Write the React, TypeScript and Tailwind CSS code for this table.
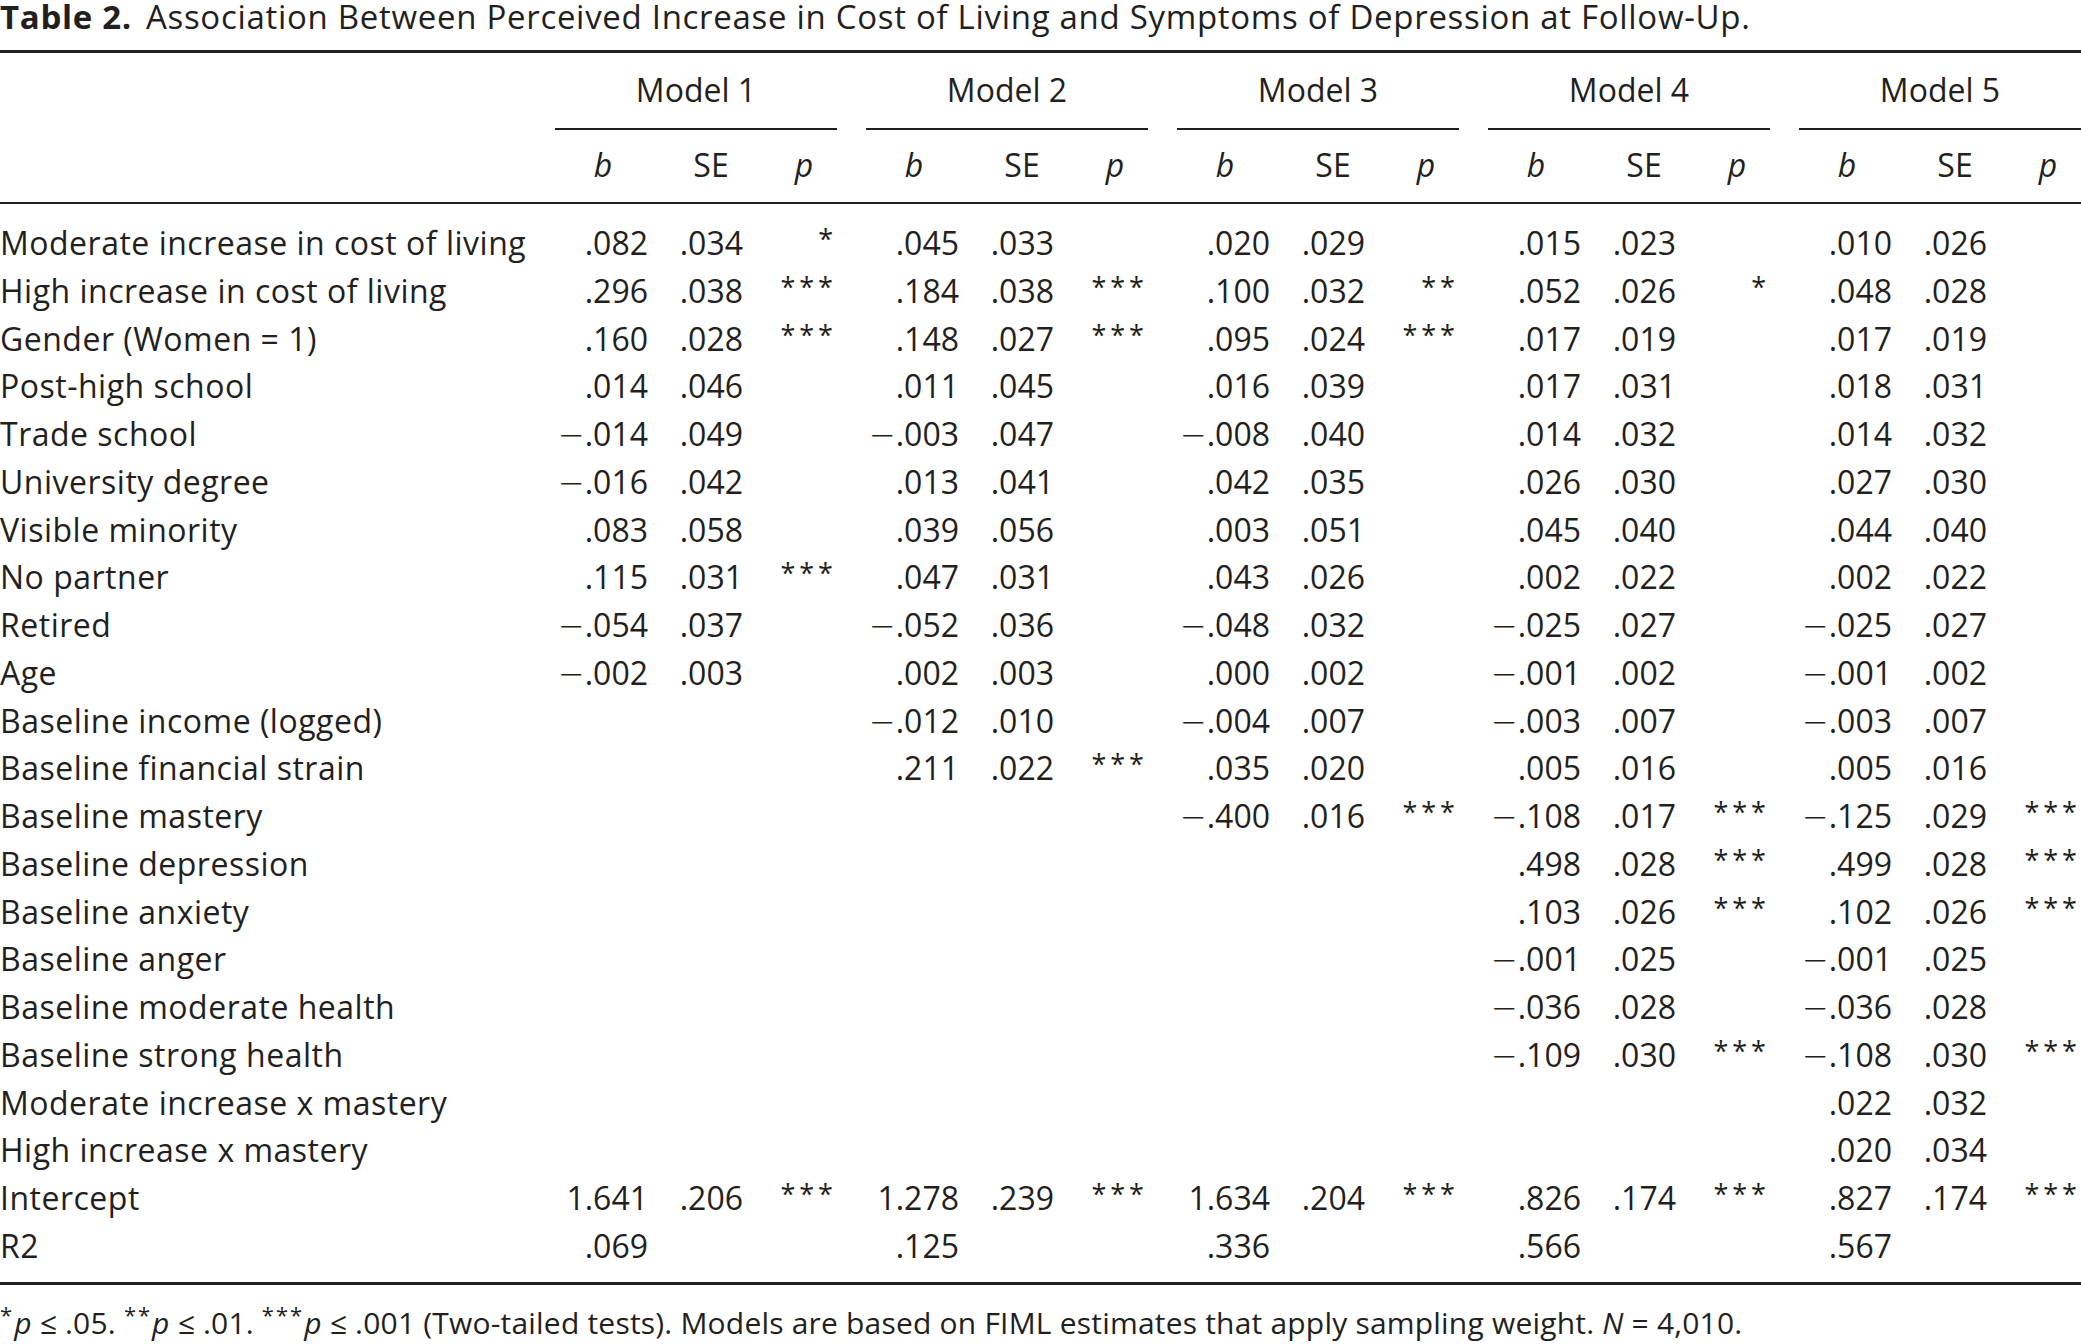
import React from "react";

// Row data: label, then [b, SE, p] for Models 1-5 (empty string = blank cell)

type Cell = [string, string, string];

interface Row {
  label: string;
  cells: Cell[];
}

const E: Cell = ["", "", ""];

const rows: Row[] = [
  { label: "Moderate increase in cost of living", cells: [[".082", ".034", "*"], [".045", ".033", ""], [".020", ".029", ""], [".015", ".023", ""], [".010", ".026", ""]] },
  { label: "High increase in cost of living", cells: [[".296", ".038", "***"], [".184", ".038", "***"], [".100", ".032", "**"], [".052", ".026", "*"], [".048", ".028", ""]] },
  { label: "Gender (Women = 1)", cells: [[".160", ".028", "***"], [".148", ".027", "***"], [".095", ".024", "***"], [".017", ".019", ""], [".017", ".019", ""]] },
  { label: "Post-high school", cells: [[".014", ".046", ""], [".011", ".045", ""], [".016", ".039", ""], [".017", ".031", ""], [".018", ".031", ""]] },
  { label: "Trade school", cells: [["−.014", ".049", ""], ["−.003", ".047", ""], ["−.008", ".040", ""], [".014", ".032", ""], [".014", ".032", ""]] },
  { label: "University degree", cells: [["−.016", ".042", ""], [".013", ".041", ""], [".042", ".035", ""], [".026", ".030", ""], [".027", ".030", ""]] },
  { label: "Visible minority", cells: [[".083", ".058", ""], [".039", ".056", ""], [".003", ".051", ""], [".045", ".040", ""], [".044", ".040", ""]] },
  { label: "No partner", cells: [[".115", ".031", "***"], [".047", ".031", ""], [".043", ".026", ""], [".002", ".022", ""], [".002", ".022", ""]] },
  { label: "Retired", cells: [["−.054", ".037", ""], ["−.052", ".036", ""], ["−.048", ".032", ""], ["−.025", ".027", ""], ["−.025", ".027", ""]] },
  { label: "Age", cells: [["−.002", ".003", ""], [".002", ".003", ""], [".000", ".002", ""], ["−.001", ".002", ""], ["−.001", ".002", ""]] },
  { label: "Baseline income (logged)", cells: [E, ["−.012", ".010", ""], ["−.004", ".007", ""], ["−.003", ".007", ""], ["−.003", ".007", ""]] },
  { label: "Baseline financial strain", cells: [E, [".211", ".022", "***"], [".035", ".020", ""], [".005", ".016", ""], [".005", ".016", ""]] },
  { label: "Baseline mastery", cells: [E, E, ["−.400", ".016", "***"], ["−.108", ".017", "***"], ["−.125", ".029", "***"]] },
  { label: "Baseline depression", cells: [E, E, E, [".498", ".028", "***"], [".499", ".028", "***"]] },
  { label: "Baseline anxiety", cells: [E, E, E, [".103", ".026", "***"], [".102", ".026", "***"]] },
  { label: "Baseline anger", cells: [E, E, E, ["−.001", ".025", ""], ["−.001", ".025", ""]] },
  { label: "Baseline moderate health", cells: [E, E, E, ["−.036", ".028", ""], ["−.036", ".028", ""]] },
  { label: "Baseline strong health", cells: [E, E, E, ["−.109", ".030", "***"], ["−.108", ".030", "***"]] },
  { label: "Moderate increase x mastery", cells: [E, E, E, E, [".022", ".032", ""]] },
  { label: "High increase x mastery", cells: [E, E, E, E, [".020", ".034", ""]] },
  { label: "Intercept", cells: [["1.641", ".206", "***"], ["1.278", ".239", "***"], ["1.634", ".204", "***"], [".826", ".174", "***"], [".827", ".174", "***"]] },
  { label: "R2", cells: [[".069", "", ""], [".125", "", ""], [".336", "", ""], [".566", "", ""], [".567", "", ""]] },
];

const models = ["Model 1", "Model 2", "Model 3", "Model 4", "Model 5"];

function Stars({ value }: { value: string }) {
  return (
    <span className="relative -top-[6px] text-[27px] tracking-[4px] -mr-[4px]">{value}</span>
  );
}

// Negative values get a wider minus sign, as in the printed table
function Num({ value }: { value: string }) {
  if (value.startsWith("−")) {
    return (
      <>
        <span className="font-['DejaVu_Sans',sans-serif] font-light">−</span>
        {value.slice(1)}
      </>
    );
  }
  return <>{value}</>;
}

export default function App() {
  return (
    <div className="w-[2081px] h-[1344px] overflow-hidden bg-white text-[#231f20] font-['Open_Sans',sans-serif]">

      {/* Caption */}

      <div className="text-[33px] leading-[34px] tracking-[0.7px] whitespace-nowrap">
        <span className="font-bold">Table 2.</span>
        <span className="ml-[14px]">Association Between Perceived Increase in Cost of Living and Symptoms of Depression at Follow-Up.</span>
      </div>

      <div className="mt-[16px] h-[3px] bg-[#231f20]"></div>

      {/* Header */}

      <div className="mt-[13px] flex text-[32px] leading-[48px]">
        <div className="w-[555px] shrink-0"></div>
        <div className="flex gap-[29px]">
          {models.map((m) => (
            <div key={m} className="w-[282px] text-center">{m}</div>
          ))}
        </div>
      </div>

      <div className="mt-[14px] flex">
        <div className="w-[555px] shrink-0"></div>
        <div className="flex gap-[29px]">
          {models.map((m) => (
            <div key={m} className="w-[282px] h-[2px] bg-[#231f20]"></div>
          ))}
        </div>
      </div>

      <div className="mt-[11px] flex text-[32px] leading-[48px]">
        <div className="w-[555px] shrink-0"></div>
        <div className="flex gap-[29px]">
          {models.map((m) => (
            <div key={m} className="w-[282px] flex">
              <div className="w-[96px] text-center italic">b</div>
              <div className="w-[120px] text-center">SE</div>
              <div className="w-[66px] text-center italic">p</div>
            </div>
          ))}
        </div>
      </div>

      <div className="mt-[13px] h-[2px] bg-[#231f20]"></div>

      {/* Body */}

      <div className="mt-[15px] flex flex-col text-[32px] leading-[47.76px]">
        {rows.map((row) => (
          <div key={row.label} className="flex h-[47.76px] whitespace-nowrap">
            <div className="w-[555px] shrink-0 tracking-[0.5px]">{row.label}</div>
            <div className="flex gap-[29px]">
              {row.cells.map((c, i) => (
                <div key={i} className="w-[282px] flex">
                  <div className="w-[93px] text-right"><Num value={c[0]} /></div>
                  <div className="w-[95px] text-right">{c[1]}</div>
                  <div className="w-[90px] text-right">{c[2] && <Stars value={c[2]} />}</div>
                </div>
              ))}
            </div>
          </div>
        ))}
      </div>

      <div className="mt-[12px] h-[3px] bg-[#231f20]"></div>

      {/* Footnote */}

      <div className="mt-[22px] text-[30px] leading-[32px] tracking-[0.2px] whitespace-nowrap">
        <sup className="text-[22px] tracking-[2px]">*</sup><span className="italic">p</span> ≤ .05.{" "}
        <sup className="text-[22px] tracking-[2px]">**</sup><span className="italic">p</span> ≤ .01.{" "}
        <sup className="text-[22px] tracking-[2px]">***</sup><span className="italic">p</span> ≤ .001 (Two-tailed tests). Models are based on FIML estimates that apply sampling weight.{" "}
        <span className="italic">N</span> = 4,010.
      </div>
    </div>
  );
}
